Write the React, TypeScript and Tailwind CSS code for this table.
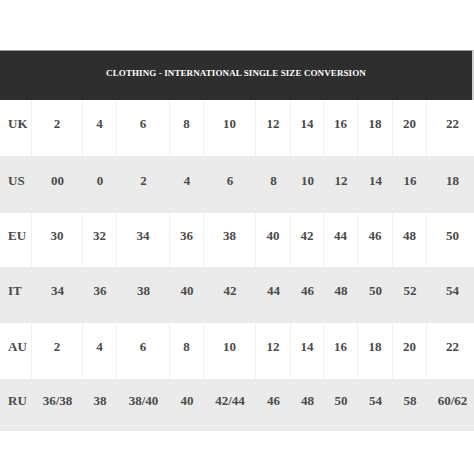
import React from "react";

const rows: { label: string; vals: string[]; gray: boolean; h: string }[] = [
  { label: "UK", vals: ["2", "4", "6", "8", "10", "12", "14", "16", "18", "20", "22"], gray: false, h: "h-[56px]" },
  { label: "US", vals: ["00", "0", "2", "4", "6", "8", "10", "12", "14", "16", "18"], gray: true, h: "h-[57px]" },
  { label: "EU", vals: ["30", "32", "34", "36", "38", "40", "42", "44", "46", "48", "50"], gray: false, h: "h-[54px]" },
  { label: "IT", vals: ["34", "36", "38", "40", "42", "44", "46", "48", "50", "52", "54"], gray: true, h: "h-[56px]" },
  { label: "AU", vals: ["2", "4", "6", "8", "10", "12", "14", "16", "18", "20", "22"], gray: false, h: "h-[56px]" },
  { label: "RU", vals: ["36/38", "38", "38/40", "40", "42/44", "46", "48", "50", "54", "58", "60/62"], gray: true, h: "h-[52px]" },
];

export default function App() {
  return (
    <div
      className="w-[474px] h-[474px] bg-white overflow-hidden pt-[50px] text-[#4a4a4a]"
      style={{ fontFamily: '"Liberation Serif", "Times New Roman", serif' }}
    >
      <div className="h-[50px] bg-[#2e2e2e] border-t border-[#9a9a9a] border-r-2 border-r-[#cfcfcf] flex items-center justify-center pb-[4px]">
        <span className="text-white font-bold text-[9px] tracking-[0.1px]">
          CLOTHING - INTERNATIONAL SINGLE SIZE CONVERSION
        </span>
      </div>
      {rows.map((r) => (
        <div
          key={r.label}
          className={`grid grid-cols-[32px_51px_34px_53px_34px_52px_35px_33px_34px_35px_34px_1fr] ${r.h} ${
            r.gray ? "bg-[#ebebeb]" : "bg-white"
          }`}
        >
          <div
            className={`flex items-center pl-[8px] pb-[8px] font-bold text-[13px] ${
              r.gray ? "" : "border-r border-[#f0f0f0]"
            }`}
          >
            {r.label}
          </div>
          {r.vals.map((v, i) => (
            <div
              key={i}
              className={`flex items-center justify-center pb-[8px] font-bold text-[13px] ${
                !r.gray && i < r.vals.length - 1 ? "border-r border-[#f0f0f0]" : ""
              } ${i === r.vals.length - 1 ? "pl-[4px]" : ""}`}
            >
              {v}
            </div>
          ))}
        </div>
      ))}
    </div>
  );
}
